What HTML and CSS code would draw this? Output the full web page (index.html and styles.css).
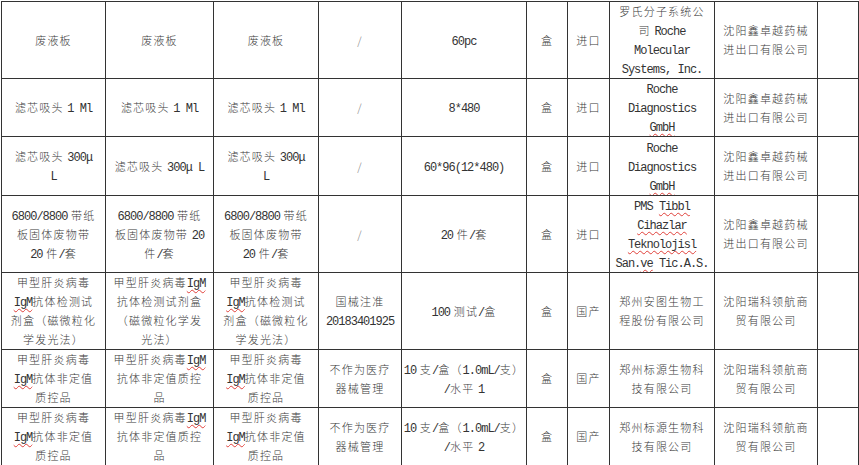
FILE: index.html
```html
<!DOCTYPE html>
<html lang="zh-CN">
<head>
<meta charset="utf-8">
<title>产品清单</title>
<link rel="stylesheet" href="styles.css">
</head>
<body>
<table class="grid">
  <colgroup>
    <col class="c1"><col class="c2"><col class="c3"><col class="c4"><col class="c5">
    <col class="c6"><col class="c7"><col class="c8"><col class="c9"><col class="c10">
  </colgroup>
  <tbody>
    <tr class="r1">
      <td>废液板</td>
      <td>废液板</td>
      <td>废液板</td>
      <td class="slash">/</td>
      <td><span class="en">60pc</span></td>
      <td>盒</td>
      <td>进口</td>
      <td>罗氏分子系统公<br>司 <span class="en">Roche</span><br><span class="en">Molecular</span><br><span class="en">Systems, Inc.</span></td>
      <td>沈阳鑫卓越药械<br>进出口有限公司</td>
      <td></td>
    </tr>
    <tr class="r2">
      <td>滤芯吸头 <span class="en">1 Ml</span></td>
      <td>滤芯吸头 <span class="en">1 Ml</span></td>
      <td>滤芯吸头 <span class="en">1 Ml</span></td>
      <td class="slash">/</td>
      <td><span class="en">8*480</span></td>
      <td>盒</td>
      <td>进口</td>
      <td><span class="en">Roche<br>Diagnostics<br><span class="sq">GmbH</span></span></td>
      <td>沈阳鑫卓越药械<br>进出口有限公司</td>
      <td></td>
    </tr>
    <tr class="r3">
      <td>滤芯吸头 <span class="en">300μ</span><br><span class="en">L</span></td>
      <td>滤芯吸头 <span class="en">300μ L</span></td>
      <td>滤芯吸头 <span class="en">300μ</span><br><span class="en">L</span></td>
      <td class="slash">/</td>
      <td><span class="en">60*96(12*480)</span></td>
      <td>盒</td>
      <td>进口</td>
      <td><span class="en">Roche<br>Diagnostics<br><span class="sq">GmbH</span></span></td>
      <td>沈阳鑫卓越药械<br>进出口有限公司</td>
      <td></td>
    </tr>
    <tr class="r4">
      <td><span class="en">6800/8800</span> 带纸<br>板固体废物带<br><span class="en">20</span> 件<span class="en">/</span>套</td>
      <td><span class="en">6800/8800</span> 带纸<br>板固体废物带 <span class="en">20</span><br>件<span class="en">/</span>套</td>
      <td><span class="en">6800/8800</span> 带纸<br>板固体废物带<br><span class="en">20</span> 件<span class="en">/</span>套</td>
      <td class="slash">/</td>
      <td><span class="en">20</span> 件<span class="en">/</span>套</td>
      <td>盒</td>
      <td>进口</td>
      <td><span class="en">PMS <span class="sq">Tibbl</span><br><span class="sq">Cihazlar</span><br><span class="sq">Teknolojisl</span><br>San.<span class="sq">ve</span> Tic.A.S.</span></td>
      <td>沈阳鑫卓越药械<br>进出口有限公司</td>
      <td></td>
    </tr>
    <tr class="r5">
      <td>甲型肝炎病毒<br><span class="en sq">IgM</span>抗体检测试<br>剂盒（磁微粒化<br>学发光法）</td>
      <td>甲型肝炎病毒<span class="en sq">IgM</span><br>抗体检测试剂盒<br>（磁微粒化学发<br>光法）</td>
      <td>甲型肝炎病毒<br><span class="en sq">IgM</span>抗体检测试<br>剂盒（磁微粒化<br>学发光法）</td>
      <td>国械注准<br><span class="en">20183401925</span></td>
      <td><span class="en">100</span> 测试<span class="en">/</span>盒</td>
      <td>盒</td>
      <td>国产</td>
      <td>郑州安图生物工<br>程股份有限公司</td>
      <td>沈阳瑞科领航商<br>贸有限公司</td>
      <td></td>
    </tr>
    <tr class="r6">
      <td>甲型肝炎病毒<br><span class="en sq">IgM</span>抗体非定值<br>质控品</td>
      <td>甲型肝炎病毒<span class="en sq">IgM</span><br>抗体非定值质控<br>品</td>
      <td>甲型肝炎病毒<br><span class="en sq">IgM</span>抗体非定值<br>质控品</td>
      <td>不作为医疗<br>器械管理</td>
      <td><span class="en">10</span> 支<span class="en">/</span>盒（<span class="en">1.0mL/</span>支）<br><span class="en">/</span>水平 <span class="en">1</span></td>
      <td>盒</td>
      <td>国产</td>
      <td>郑州标源生物科<br>技有限公司</td>
      <td>沈阳瑞科领航商<br>贸有限公司</td>
      <td></td>
    </tr>
    <tr class="r7">
      <td>甲型肝炎病毒<br><span class="en sq">IgM</span>抗体非定值<br>质控品</td>
      <td>甲型肝炎病毒<span class="en sq">IgM</span><br>抗体非定值质控<br>品</td>
      <td>甲型肝炎病毒<br><span class="en sq">IgM</span>抗体非定值<br>质控品</td>
      <td>不作为医疗<br>器械管理</td>
      <td><span class="en">10</span> 支<span class="en">/</span>盒（<span class="en">1.0mL/</span>支）<br><span class="en">/</span>水平 <span class="en">2</span></td>
      <td>盒</td>
      <td>国产</td>
      <td>郑州标源生物科<br>技有限公司</td>
      <td>沈阳瑞科领航商<br>贸有限公司</td>
      <td></td>
    </tr>
  </tbody>
</table>
</body>
</html>
```

FILE: styles.css
```css
html, body {
  margin: 0;
  padding: 0;
  background: #ffffff;
}

.grid {
  margin: 1px 0 0 1px;
  width: 857px;
  table-layout: fixed;
  border-collapse: collapse;
  font-family: "Noto Sans CJK SC", "Noto Sans", sans-serif;
  font-size: 11px;
  font-weight: 300;
  letter-spacing: 1.2px;
  color: #3a3a3a;
}

.grid td {
  border: 1px solid #333333;
  padding: 0 1px;
  text-align: center;
  vertical-align: middle;
  line-height: 19px;
  white-space: nowrap;
  overflow: hidden;
}

.c1 { width: 104px; }
.c2 { width: 108px; }
.c3 { width: 105px; }
.c4 { width: 83px; }
.c5 { width: 125px; }
.c6 { width: 41px; }
.c7 { width: 42px; }
.c8 { width: 105px; }
.c9 { width: 103px; }
.c10 { width: 41px; }

.r1 { height: 76px; }
.r2 { height: 58px; }
.r3 { height: 59px; }
.r4 { height: 76px; }
.r5 { height: 77px; }
.r6 { height: 58px; }
.r7 { height: 58px; }

.en {
  font-family: "Liberation Mono", monospace;
  font-size: 12px;
  font-weight: 400;
  letter-spacing: -1px;
  line-height: 1;
  color: #333333;
}

.slash {
  color: #777777;
}

.sq {
  text-decoration-line: underline;
  text-decoration-style: wavy;
  text-decoration-color: #e0403a;
  text-decoration-thickness: 1px;
  text-underline-offset: 2px;
}
```
